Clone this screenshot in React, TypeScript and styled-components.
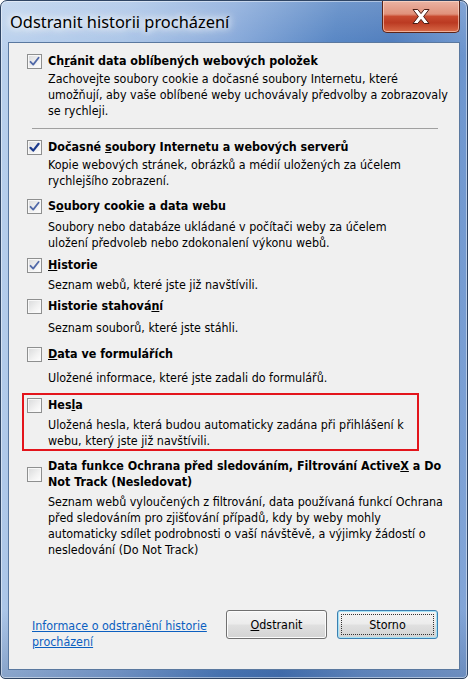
import type { ReactNode } from 'react';
import styled, { createGlobalStyle } from 'styled-components';

const GlobalStyle = createGlobalStyle`
  html, body {
    margin: 0;
    padding: 0;
    background: #ffffff;
  }
  body {
    width: 468px;
    height: 679px;
    overflow: hidden;
  }
`;

const uiFont = `"DejaVu Sans Condensed", "DejaVu Sans", "Liberation Sans", sans-serif`;

const Window = styled.div`
  box-sizing: border-box;
  width: 468px;
  height: 679px;
  display: flex;
  flex-direction: column;
  padding: 0 7px 8px 7px;
  border: 1px solid #2f4564;
  border-radius: 7px 7px 5px 5px;
  background:
    linear-gradient(180deg, rgba(255, 255, 255, 0.18) 0%, rgba(255, 255, 255, 0) 8%, rgba(30, 60, 110, 0) 90%, rgba(30, 60, 110, 0.25) 100%),
    linear-gradient(100deg, #bad1ed 0%, #a9c4e7 22%, #87a9da 40%, #5282c2 58%, #4a79bb 68%, #6f97cf 82%, #86a8d9 100%);
  box-shadow: inset 0 0 0 1px rgba(255, 255, 255, 0.45);
  overflow: hidden;
`;

const TitleBar = styled.div`
  height: 41px;
  flex: none;
  display: flex;
  justify-content: space-between;
  align-items: flex-start;
`;

const Title = styled.div`
  margin: 11px 0 0 2px;
  font-family: "Noto Sans", "Open Sans", sans-serif;
  font-size: 16.4px;
  line-height: 20px;
  color: #000000;
  text-shadow: 0 0 6px #ffffff, 0 0 10px #ffffff, 0 0 16px rgba(255, 255, 255, 0.9);
`;

const CloseButton = styled.div`
  box-sizing: border-box;
  width: 78px;
  height: 32px;
  display: flex;
  align-items: center;
  justify-content: center;
  border: 1px solid #5c2418;
  border-top: none;
  border-radius: 0 0 5px 5px;
  background: linear-gradient(180deg, #eab3a3 0%, #e0917b 42%, #c84a30 50%, #bb3a22 70%, #d86a48 100%);
  box-shadow: inset 0 0 0 1px rgba(255, 225, 210, 0.6);
`;

const Client = styled.div`
  flex: 1;
  display: flex;
  flex-direction: column;
  border: 1px solid #5a789f;
  background: #f0f0f0;
  padding: 10px 21px 19px 18px;
  font-family: ${uiFont};
  font-size: 12.4px;
  color: #000000;
`;

const Item = styled.div<{ $top: number; $highlight?: boolean }>`
  position: relative;
  margin-top: ${p => p.$top}px;

  ${p => p.$highlight && `
    &::after {
      content: '';
      position: absolute;
      left: -5px;
      top: -4px;
      width: 397px;
      height: 58px;
      box-sizing: border-box;
      border: 2px solid #e3141b;
      pointer-events: none;
    }
  `}
`;

const Header = styled.div`
  display: flex;
  align-items: center;
  gap: 6px;
`;

const CheckBox = styled.span`
  box-sizing: border-box;
  width: 15px;
  height: 15px;
  flex: none;
  border: 1px solid #8e8f8f;
  background: linear-gradient(135deg, #d9dadb 0%, #f2f2f2 60%, #ffffff 100%);
  box-shadow: inset 0 0 0 1px #f8f8f8;
  display: flex;
  align-items: center;
  justify-content: center;
`;

const ItemTitle = styled.div`
  font-weight: bold;
  line-height: 16px;
  white-space: nowrap;
`;

const Desc = styled.div<{ $gap: number }>`
  margin-top: ${p => p.$gap}px;
  padding-left: 21px;
  line-height: 16px;
  white-space: nowrap;
`;

const Separator = styled.div`
  height: 1px;
  margin: 9px 0 10px 5px;
  width: 406px;
  background: #a0a0a0;
`;

const Footer = styled.div`
  margin-top: auto;
  display: flex;
  align-items: flex-start;
  padding-left: 5px;
`;

const HelpLink = styled.a`
  margin-top: 8px;
  flex: 1;
  color: #0b5fc0;
  text-decoration: underline;
  line-height: 16px;
  cursor: pointer;
`;

const Buttons = styled.div`
  display: flex;
  gap: 10px;
`;

const DialogButton = styled.button<{ $default?: boolean }>`
  position: relative;
  box-sizing: border-box;
  width: 101px;
  height: 29px;
  font-family: ${uiFont};
  font-size: 12.4px;
  color: #000000;
  border: 1px solid ${p => (p.$default ? '#3c7fb1' : '#707070')};
  border-radius: 3px;
  background: linear-gradient(180deg, #f4f4f4 0%, #ececec 48%, #e0e0e0 52%, #d3d3d3 100%);
  box-shadow: inset 0 0 0 1px ${p => (p.$default ? '#a6e3f7' : '#fcfcfc')};
  padding: 0;

  ${p => p.$default && `
    &::after {
      content: '';
      position: absolute;
      inset: 3px;
      border: 1px dotted #333;
    }
  `}
`;

function Check({ dark }: { dark?: boolean }) {
  return (
    <svg width="11" height="11" viewBox="0 0 11 11">
      <path
        d="M1.5 5.8 L4.2 8.6 L9.6 1.8"
        fill="none"
        stroke={dark ? '#1b3a8c' : '#5169a8'}
        strokeWidth={dark ? 2.2 : 1.8}
        strokeLinecap="round"
        strokeLinejoin="round"
      />
    </svg>
  );
}

function CloseGlyph() {
  return (
    <svg width="22" height="17" viewBox="0 0 22 17">
      <path
        d="M3 1.5 L7.8 1.5 L11 5.6 L14.2 1.5 L19 1.5 L13.6 8.5 L19 15.5 L14.2 15.5 L11 11.4 L7.8 15.5 L3 15.5 L8.4 8.5 Z"
        fill="#ffffff"
        stroke="#4a1c14"
        strokeWidth="1"
        strokeLinejoin="round"
      />
    </svg>
  );
}

interface Entry {
  title: ReactNode;
  lines: string[];
  checked?: boolean;
  dark?: boolean;
  top: number;
  gap: number;
  highlight?: boolean;
}

const entries: Entry[] = [
  {
    title: <>Ch<u>r</u>ánit data oblíbených webových položek</>,
    lines: [
      'Zachovejte soubory cookie a dočasné soubory Internetu, které',
      'umožňují, aby vaše oblíbené weby uchovávaly předvolby a zobrazovaly',
      'se rychleji.',
    ],
    checked: true,
    top: 0,
    gap: 2,
  },
  {
    title: <>Dočasné <u>s</u>oubory Internetu a webových serverů</>,
    lines: ['Kopie webových stránek, obrázků a médií uložených za účelem', 'rychlejšího zobrazení.'],
    checked: true,
    dark: true,
    top: 0,
    gap: 2,
  },
  {
    title: <>S<u>o</u>ubory cookie a data webu</>,
    lines: ['Soubory nebo databáze ukládané v počítači weby za účelem', 'uložení předvoleb nebo zdokonalení výkonu webů.'],
    checked: true,
    top: 9,
    gap: 5,
  },
  {
    title: <><u>H</u>istorie</>,
    lines: ['Seznam webů, které jste již navštívili.'],
    checked: true,
    top: 6,
    gap: 4,
  },
  {
    title: <>Historie stahová<u>n</u>í</>,
    lines: ['Seznam souborů, které jste stáhli.'],
    top: 5,
    gap: 6,
  },
  {
    title: <><u>D</u>ata ve formulářích</>,
    lines: ['Uložené informace, které jste zadali do formulářů.'],
    top: 10,
    gap: 8,
  },
  {
    title: <>Hes<u>l</u>a</>,
    lines: ['Uložená hesla, která budou automaticky zadána při přihlášení k', 'webu, který jste již navštívili.'],
    top: 11,
    gap: 4,
    highlight: true,
  },
  {
    title: <>Data funkce Ochrana před sledováním, Filtrování Active<u>X</u> a Do<br />Not Track (Nesledovat)</>,
    lines: [
      'Seznam webů vyloučených z filtrování, data používaná funkcí Ochrana',
      'před sledováním pro zjišťování případů, kdy by weby mohly',
      'automaticky sdílet podrobnosti o vaší návštěvě, a výjimky žádostí o',
      'nesledování (Do Not Track)',
    ],
    top: 9,
    gap: 4,
  },
];

function Option({ entry }: { entry: Entry }) {
  return (
    <Item $top={entry.top} $highlight={entry.highlight}>
      <Header>
        <CheckBox>{entry.checked && <Check dark={entry.dark} />}</CheckBox>
        <ItemTitle>{entry.title}</ItemTitle>
      </Header>
      <Desc $gap={entry.gap}>
        {entry.lines.map((line, i) => (
          <div key={i}>{line}</div>
        ))}
      </Desc>
    </Item>
  );
}

export default function App() {
  const [first, ...rest] = entries;
  return (
    <>
      <GlobalStyle />
      <Window>
        <TitleBar>
          <Title>Odstranit historii procházení</Title>
          <CloseButton>
            <CloseGlyph />
          </CloseButton>
        </TitleBar>
        <Client>
          <Option entry={first} />
          <Separator />
          {rest.map((entry, i) => (
            <Option key={i} entry={entry} />
          ))}
          <Footer>
            <HelpLink>
              Informace o odstranění historie
              <br />
              procházení
            </HelpLink>
            <Buttons>
              <DialogButton>
                <u>O</u>dstranit
              </DialogButton>
              <DialogButton $default>Storno</DialogButton>
            </Buttons>
          </Footer>
        </Client>
      </Window>
    </>
  );
}
